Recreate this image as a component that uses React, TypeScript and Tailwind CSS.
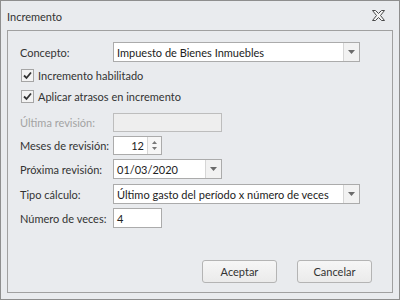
const font = { fontFamily: 'Lato, "Noto Sans", sans-serif' }

const Arrow = () => (
  <svg width="7" height="4" viewBox="0 0 7 4">
    <path d="M0 0 H7 L3.5 4 Z" fill="#6b6b6b" />
  </svg>
)

const Check = () => (
  <div className="w-[13px] h-[13px] border border-[#a5a5a5] bg-[#f3f3f3] flex items-center justify-center">
    <svg width="9" height="9" viewBox="0 0 9 9">
      <path d="M1 4.5 L3.5 7 L8 1.5" fill="none" stroke="#333" strokeWidth="1.8" />
    </svg>
  </div>
)

const Combo = ({ value, width }: { value: string; width: string }) => (
  <div className={`${width} h-[20px] border border-[#ababab] bg-white flex`}>
    <div className="flex-1 pl-[3px] flex items-center text-[#222] overflow-hidden whitespace-nowrap">{value}</div>
    <div className="w-[16px] border-l border-[#d6d6d6] bg-[#f2f2f2] flex items-center justify-center">
      <Arrow />
    </div>
  </div>
)

const Row = ({ label, children, className = "", muted = false }: { label: string; children: React.ReactNode; className?: string; muted?: boolean }) => (
  <div className={`flex items-center ${className}`}>
    <div className={`w-[93px] whitespace-nowrap ${muted ? "text-[#a3a3a3]" : "text-[#333]"}`}>{label}</div>
    {children}
  </div>
)

export default function App() {
  return (
    <div style={font} className="w-[400px] h-[300px] bg-[#e9ebee] border border-[#8e8e8e] text-[11px] leading-none flex flex-col">
      <div className="h-[29px] flex items-center justify-between pl-[6px] pr-[14px] text-[#333]">
        <span className="pt-[1px]">Incremento</span>
        <svg width="13" height="11" viewBox="0 0 13 11">
          <path
            d="M0.5 0.5 H3.5 L6.5 3.5 L9.5 0.5 H12.5 L8.5 5.5 L12.5 10.5 H9.5 L6.5 7.5 L3.5 10.5 H0.5 L4.5 5.5 Z"
            fill="#f4f4f4"
            stroke="#4a4a4a"
            strokeWidth="1"
            strokeLinejoin="round"
          />
        </svg>
      </div>
      <div className="mx-[6px] h-[263px] border border-[#a0a0a0] pl-[12px] pt-[11px] flex flex-col">
        <Row label="Concepto:">
          <Combo value="Impuesto de Bienes Inmuebles" width="w-[247px]" />
        </Row>
        <div className="flex items-center gap-[4px] mt-[7px] pl-[1px] text-[#333]">
          <Check />
          <span>Incremento habilitado</span>
        </div>
        <div className="flex items-center gap-[4px] mt-[8px] pl-[1px] text-[#333]">
          <Check />
          <span>Aplicar atrasos en incremento</span>
        </div>
        <Row label="Última revisión:" muted className="mt-[10px]">
          <div className="w-[109px] h-[19px] border border-[#bdbdbd] bg-[#eeeeee]" />
        </Row>
        <Row label="Meses de revisión:" className="mt-[4px]">
          <div className="w-[49px] h-[19px] border border-[#ababab] bg-white flex">
            <div className="flex-1 flex items-center justify-end pr-[3px] text-[#222]">12</div>
            <div className="w-[14px] border-l border-[#d6d6d6] bg-[#f6f6f6] flex flex-col items-center justify-center gap-[3px]">
              <svg width="5" height="3" viewBox="0 0 5 3"><path d="M0 3 L2.5 0 L5 3 Z" fill="#777" /></svg>
              <svg width="5" height="3" viewBox="0 0 5 3"><path d="M0 0 H5 L2.5 3 Z" fill="#777" /></svg>
            </div>
          </div>
        </Row>
        <Row label="Próxima revisión:" className="mt-[4px]">
          <Combo value="01/03/2020" width="w-[109px]" />
        </Row>
        <Row label="Tipo cálculo:" className="mt-[5px]">
          <Combo value="Último gasto del período x número de veces" width="w-[247px]" />
        </Row>
        <Row label="Número de veces:" className="mt-[4px]">
          <div className="w-[49px] h-[20px] border border-[#ababab] bg-white flex items-center pl-[3px] text-[#222]">4</div>
        </Row>
        <div className="flex justify-end gap-[20px] mt-[32px] pr-[20px]">
          <button className="w-[75px] h-[23px] rounded-[3px] border border-[#b4b4b4] bg-gradient-to-b from-[#f6f6f6] to-[#ebebeb] text-[#333]">Aceptar</button>
          <button className="w-[75px] h-[23px] rounded-[3px] border border-[#b4b4b4] bg-gradient-to-b from-[#f6f6f6] to-[#ebebeb] text-[#333]">Cancelar</button>
        </div>
      </div>
    </div>
  )
}
